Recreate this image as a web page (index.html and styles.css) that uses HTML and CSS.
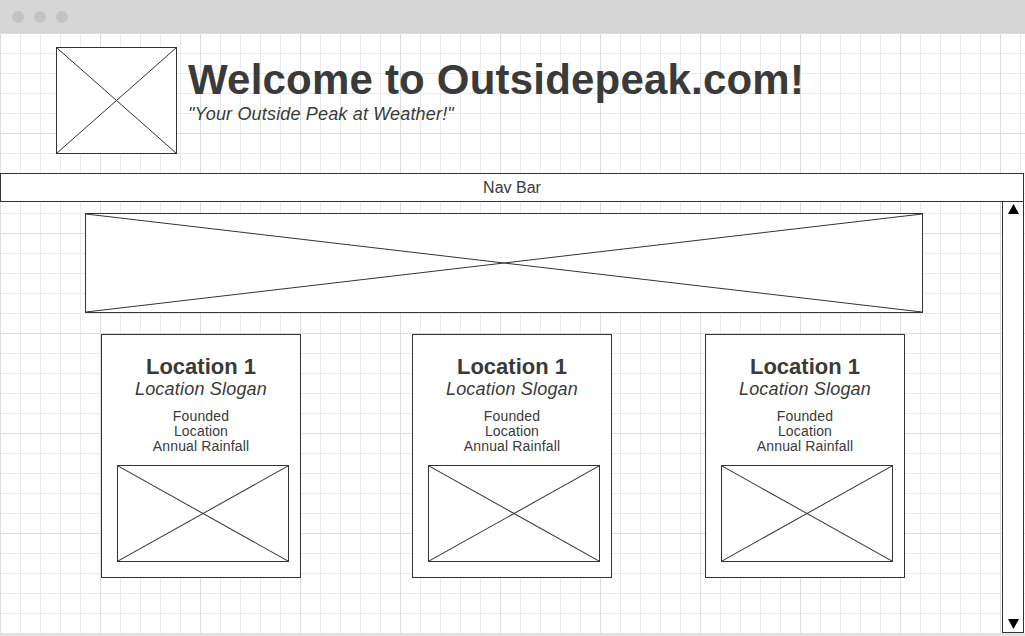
FILE: index.html
```html
<!DOCTYPE html>
<html lang="en">
<head>
<meta charset="utf-8">
<title>Outsidepeak.com wireframe</title>
<link rel="stylesheet" href="styles.css">
</head>
<body>
<div class="window">
  <div class="titlebar">
    <span class="dot"></span><span class="dot"></span><span class="dot"></span>
  </div>
  <div class="canvas">
    <header class="header">
      <div class="ph logo">
        <svg class="x" viewBox="0 0 100 100" preserveAspectRatio="none"><line x1="0" y1="0" x2="100" y2="100" vector-effect="non-scaling-stroke"/><line x1="100" y1="0" x2="0" y2="100" vector-effect="non-scaling-stroke"/></svg>
      </div>
      <div class="titles">
        <h1 class="title">Welcome to Outsidepeak.com!</h1>
        <p class="tagline">"Your Outside Peak at Weather!"</p>
      </div>
    </header>
    <nav class="nav">Nav Bar</nav>
    <div class="main">
      <div class="content">
        <div class="ph banner">
          <svg class="x" viewBox="0 0 100 100" preserveAspectRatio="none"><line x1="0" y1="0" x2="100" y2="100" vector-effect="non-scaling-stroke"/><line x1="100" y1="0" x2="0" y2="100" vector-effect="non-scaling-stroke"/></svg>
        </div>
        <div class="cards">
          <div class="card card-a">
            <h2 class="card-title">Location 1</h2>
            <p class="card-slogan">Location Slogan</p>
            <ul class="card-facts"><li>Founded</li><li>Location</li><li>Annual Rainfall</li></ul>
            <div class="ph card-img">
              <svg class="x" viewBox="0 0 100 100" preserveAspectRatio="none"><line x1="0" y1="0" x2="100" y2="100" vector-effect="non-scaling-stroke"/><line x1="100" y1="0" x2="0" y2="100" vector-effect="non-scaling-stroke"/></svg>
            </div>
          </div>
          <div class="card card-b">
            <h2 class="card-title">Location 1</h2>
            <p class="card-slogan">Location Slogan</p>
            <ul class="card-facts"><li>Founded</li><li>Location</li><li>Annual Rainfall</li></ul>
            <div class="ph card-img">
              <svg class="x" viewBox="0 0 100 100" preserveAspectRatio="none"><line x1="0" y1="0" x2="100" y2="100" vector-effect="non-scaling-stroke"/><line x1="100" y1="0" x2="0" y2="100" vector-effect="non-scaling-stroke"/></svg>
            </div>
          </div>
          <div class="card card-c">
            <h2 class="card-title">Location 1</h2>
            <p class="card-slogan">Location Slogan</p>
            <ul class="card-facts"><li>Founded</li><li>Location</li><li>Annual Rainfall</li></ul>
            <div class="ph card-img">
              <svg class="x" viewBox="0 0 100 100" preserveAspectRatio="none"><line x1="0" y1="0" x2="100" y2="100" vector-effect="non-scaling-stroke"/><line x1="100" y1="0" x2="0" y2="100" vector-effect="non-scaling-stroke"/></svg>
            </div>
          </div>
        </div>
      </div>
      <div class="scrollbar">
        <svg class="arrow" viewBox="0 0 10 9"><polygon points="5,0 10,9 0,9"/></svg>
        <svg class="arrow" viewBox="0 0 10 9"><polygon points="0,0 10,0 5,9"/></svg>
      </div>
    </div>
  </div>
</div>
</body>
</html>
```
FILE: styles.css
```css
* { box-sizing: border-box; }

html, body {
  margin: 0;
  padding: 0;
}

body {
  width: 1025px;
  height: 636px;
  overflow: hidden;
  background: #e2e2e2;
  font-family: "Liberation Sans", Arial, sans-serif;
  color: #3a3a3a;
}

.window {
  width: 1025px;
}

.titlebar {
  height: 33px;
  background: #d6d6d6;
  display: flex;
  align-items: center;
  gap: 10px;
  padding-left: 12px;
}

.dot {
  width: 12px;
  height: 12px;
  border-radius: 50%;
  background: #c4c4c4;
}

.canvas {
  height: 600px;
  background-color: #ffffff;
  background-image:
    linear-gradient(to right, #dedede 1px, transparent 1px),
    linear-gradient(to bottom, #dedede 1px, transparent 1px),
    linear-gradient(to right, #ebebeb 1px, transparent 1px),
    linear-gradient(to bottom, #ebebeb 1px, transparent 1px);
  background-size: 100px 100px, 100px 100px, 20px 20px, 20px 20px;
}

.ph {
  border: 1px solid #333333;
  background: #ffffff;
}

.x {
  display: block;
  width: 100%;
  height: 100%;
}

.x line {
  stroke: #333333;
  stroke-width: 1;
}

.header {
  display: flex;
  align-items: flex-start;
  padding: 14px 0 0 56px;
}

.logo {
  width: 121px;
  height: 107px;
  flex: none;
}

.titles {
  margin: 10px 0 0 11px;
}

.title {
  margin: 0;
  font-size: 42px;
  line-height: 46px;
  font-weight: bold;
  letter-spacing: 0.2px;
  color: #3a3a3a;
}

.tagline {
  margin: 1px 0 0;
  font-size: 18px;
  line-height: 20px;
  font-style: italic;
  letter-spacing: 0.17px;
  color: #3a3a3a;
}

.nav {
  margin-top: 19px;
  width: 1024px;
  height: 29px;
  border: 1px solid #333333;
  background: #ffffff;
  text-align: center;
  font-size: 16px;
  line-height: 27px;
  color: #3a3a3a;
}

.main {
  display: flex;
  height: 431px;
}

.content {
  width: 1002px;
  flex: none;
}

.banner {
  margin: 11px 0 0 85px;
  width: 838px;
  height: 100px;
}

.cards {
  display: flex;
  margin-top: 21px;
}

.card {
  width: 200px;
  height: 244px;
  border: 1px solid #333333;
  background: #ffffff;
  text-align: center;
  padding-top: 19px;
}

.card-a { margin-left: 101px; }
.card-b { margin-left: 111px; }
.card-c { margin-left: 93px; }

.card-title {
  margin: 0;
  font-size: 22px;
  line-height: 25px;
  font-weight: bold;
  color: #3a3a3a;
}

.card-slogan {
  margin: 0;
  font-size: 18px;
  line-height: 20px;
  font-style: italic;
  letter-spacing: 0.2px;
  color: #3a3a3a;
}

.card-facts {
  list-style: none;
  margin: 10px 0 0;
  padding: 0;
  font-size: 14px;
  line-height: 15px;
  letter-spacing: 0.15px;
  color: #3a3a3a;
}

.card-img {
  margin: 11px 0 0 15px;
  width: 172px;
  height: 97px;
}

.scrollbar {
  width: 22px;
  height: 431px;
  border: 1px solid #333333;
  border-top: none;
  background: #ffffff;
  display: flex;
  flex-direction: column;
  justify-content: space-between;
  align-items: center;
  padding: 2px 0 3px;
}

.arrow {
  display: block;
  width: 11px;
  height: 10px;
}

.arrow polygon {
  fill: #000000;
}
```
